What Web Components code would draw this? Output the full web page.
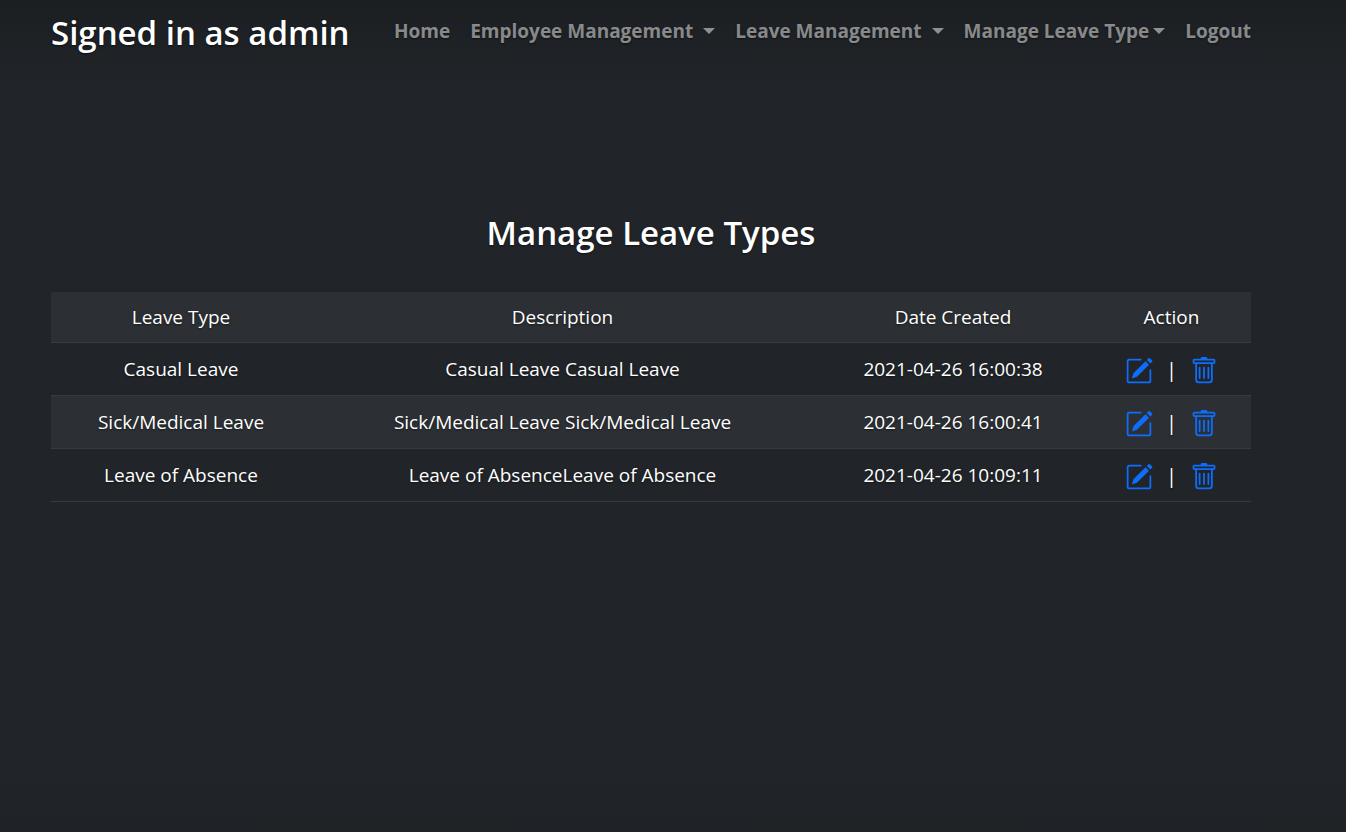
<!DOCTYPE html>
<html lang="en">
<head>
<meta charset="utf-8">
<title>Manage Leave Types</title>
<style>
  html { height: 100%; background: #212529; }
  body {
    margin: 0;
    min-height: 100%;
    font-family: "Segoe UI", "Open Sans", "Noto Sans", sans-serif;
    font-size: 19px;
    line-height: 30px;
    color: #fff;
    text-shadow: 0 1px 2px rgba(0, 0, 0, .5);
    background: linear-gradient(rgba(0, 0, 0, .18), transparent 90px, transparent calc(100% - 60px), rgba(0, 0, 0, .07)) #212529;
  }
</style>
</head>
<body>
<leave-page>
  <site-header slot="header">
    <span slot="brand">Signed in as admin</span>
    <nav-item>Home</nav-item>
    <nav-item menu="spaced">Employee Management</nav-item>
    <nav-item menu="spaced">Leave Management</nav-item>
    <nav-item menu="tight">Manage Leave Type</nav-item>
    <nav-item>Logout</nav-item>
  </site-header>
  <span slot="title">Manage Leave Types</span>
  <leave-table></leave-table>
</leave-page>

<script>
class Base extends HTMLElement {
  constructor() {
    super();
    this.attachShadow({ mode: "open" });
  }
  connectedCallback() {
    this.shadowRoot.innerHTML = this.render();
  }
}

customElements.define("leave-page", class extends Base {
  render() {
    return `<style>
      :host { display: block; padding: 8px 95px 24px 51px; }
      h2 { margin: 150px 0 34px; font-size: 33px; line-height: 50px; font-weight: 600; text-align: center; }
    </style>
    <slot name="header"></slot>
    <main><h2><slot name="title"></slot></h2><slot></slot></main>`;
  }
});

customElements.define("site-header", class extends Base {
  render() {
    return `<style>
      :host { display: block; }
      header { display: flex; justify-content: space-between; align-items: flex-start; }
      h3 { margin: 0; font-size: 33px; line-height: 50px; font-weight: 600; white-space: nowrap; }
      nav { display: flex; gap: 20px; padding-top: 8px; }
    </style>
    <header><h3><slot name="brand"></slot></h3><nav><slot></slot></nav></header>`;
  }
});

customElements.define("nav-item", class extends Base {
  render() {
    const menu = this.getAttribute("menu");
    return `<style>
      :host { display: block; }
      a { display: flex; align-items: center; font-weight: 700; color: rgba(255, 255, 255, .5); text-decoration: none; white-space: nowrap; }
      i { border: 6px solid transparent; border-top-color: currentColor; border-bottom: 0; margin-left: 4px; }
      i.spaced { margin-left: 10px; }
    </style>
    <a href="#"><slot></slot>${menu ? `<i class="${menu}"></i>` : ""}</a>`;
  }
});

const ICONS = {
  edit: `<path d="M15.502 1.94a.5.5 0 0 1 0 .706L14.459 3.69l-2-2L13.502.646a.5.5 0 0 1 .707 0l1.293 1.293zm-1.75 2.456-2-2L4.939 9.21a.5.5 0 0 0-.121.196l-.805 2.414a.25.25 0 0 0 .316.316l2.414-.805a.5.5 0 0 0 .196-.12l6.813-6.814z"/><path fill-rule="evenodd" d="M1 13.5A1.5 1.5 0 0 0 2.5 15h11a1.5 1.5 0 0 0 1.5-1.5v-6a.5.5 0 0 0-1 0v6a.5.5 0 0 1-.5.5h-11a.5.5 0 0 1-.5-.5v-11a.5.5 0 0 1 .5-.5H9a.5.5 0 0 0 0-1H2.5A1.5 1.5 0 0 0 1 2.5v11z"/>`,
  trash: `<path d="M5.5 5.5A.5.5 0 0 1 6 6v6a.5.5 0 0 1-1 0V6a.5.5 0 0 1 .5-.5zm2.5 0a.5.5 0 0 1 .5.5v6a.5.5 0 0 1-1 0V6a.5.5 0 0 1 .5-.5zm3 .5a.5.5 0 0 0-1 0v6a.5.5 0 0 0 1 0V6z"/><path fill-rule="evenodd" d="M14.5 3a1 1 0 0 1-1 1H13v9a2 2 0 0 1-2 2H5a2 2 0 0 1-2-2V4h-.5a1 1 0 0 1-1-1V2a1 1 0 0 1 1-1H6a1 1 0 0 1 1-1h2a1 1 0 0 1 1 1h3.5a1 1 0 0 1 1 1v1zM4.118 4 4 4.059V13a1 1 0 0 0 1 1h6a1 1 0 0 0 1-1V4.059L11.882 4H4.118zM2.5 3V2h11v1h-11z"/>`
};

customElements.define("row-action", class extends Base {
  render() {
    return `<style>
      :host { display: block; }
      a { display: block; color: #0d6efd; }
      svg { display: block; width: 28px; height: 28px; fill: currentColor; }
    </style>
    <a href="#" aria-label="${this.getAttribute("label")}"><svg viewBox="0 0 16 16" aria-hidden="true">${ICONS[this.getAttribute("icon")]}</svg></a>`;
  }
});

const ROWS = [
  ["Casual Leave", "Casual Leave Casual Leave", "2021-04-26 16:00:38"],
  ["Sick/Medical Leave", "Sick/Medical Leave Sick/Medical Leave", "2021-04-26 16:00:41"],
  ["Leave of Absence", "Leave of AbsenceLeave of Absence", "2021-04-26 10:09:11"]
];

customElements.define("leave-table", class extends Base {
  render() {
    return `<style>
      :host { display: block; }
      table { width: 100%; table-layout: fixed; border-spacing: 0; text-align: center; }
      th, td { padding: 10px; border-bottom: 1px solid #373b3e; font-weight: 400; }
      td { height: 32px; }
      tr:nth-child(even) td, th { background: #2c3034; }
      .type { width: 240px; }
      .desc { width: 483px; }
      .date { width: 258px; }
      .act { width: 139px; }
      .actions { display: flex; justify-content: center; align-items: flex-end; gap: 13px; height: 32px; }
      .actions span { font-size: 20px; }
    </style>
    <table>
      <thead><tr><th class="type">Leave Type</th><th class="desc">Description</th><th class="date">Date Created</th><th class="act">Action</th></tr></thead>
      <tbody>${ROWS.map(r => `<tr>${r.map(c => `<td>${c}</td>`).join("")}<td><div class="actions">
        <row-action icon="edit" label="Edit ${r[0]}"></row-action><span>|</span><row-action icon="trash" label="Delete ${r[0]}"></row-action></div></td></tr>`).join("")}</tbody>
    </table>`;
  }
});
</script>
</body>
</html>
